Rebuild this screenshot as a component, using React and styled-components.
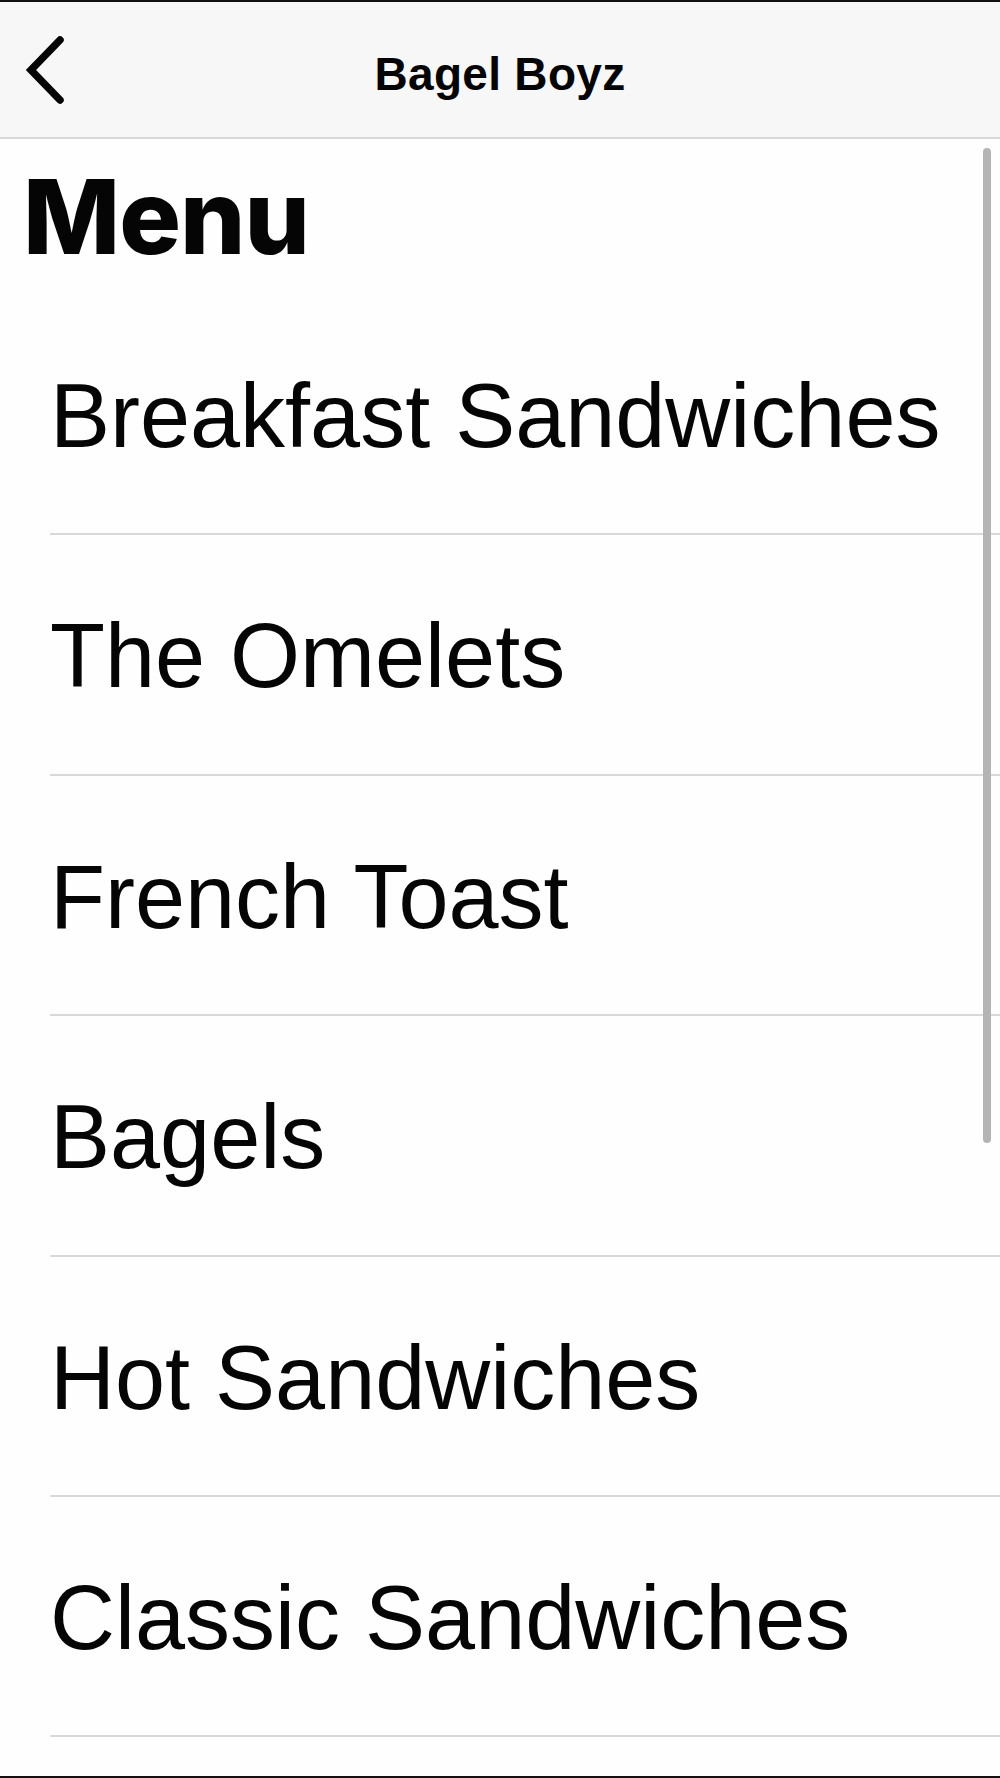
import React from "react";
import styled, { createGlobalStyle } from "styled-components";

const GlobalStyle = createGlobalStyle`
  html, body {
    margin: 0;
    padding: 0;
    background: #fefefe;
  }
  * {
    box-sizing: border-box;
  }
`;

const Screen = styled.div`
  position: relative;
  height: 1778px;
  overflow: hidden;
  background: #fefefe;
  border-top: 2px solid #111;
  border-bottom: 2px solid #111;
  font-family: "Liberation Sans", Arial, sans-serif;
  color: #050505;
`;

const NavBar = styled.header`
  display: grid;
  grid-template-columns: 1fr auto 1fr;
  align-items: center;
  height: 137px;
  background: #f7f7f8;
  border-bottom: 2px solid #d8d8d8;
`;

const BackButton = styled.button`
  justify-self: start;
  display: flex;
  align-items: center;
  padding: 0 0 0 22px;
  margin-top: 1px;
  border: none;
  background: none;
  cursor: pointer;
`;

const NavTitle = styled.h1`
  margin: 0;
  padding-top: 9px;
  font-size: 46px;
  line-height: 126px;
  font-weight: 700;
  letter-spacing: 0.3px;
`;

const Heading = styled.h2`
  margin: 0;
  padding-left: 23px;
  font-family: Inter, "Liberation Sans", sans-serif;
  font-size: 103px;
  line-height: 156px;
  font-weight: 800;
  letter-spacing: -1px;
`;

const List = styled.ul`
  list-style: none;
  margin: 0;
  padding: 0;
`;

const Row = styled.li`
  margin-left: 50px;
  padding-top: 4px;
  line-height: 234.4px;
  font-size: 90px;
  font-weight: 400;
  white-space: nowrap;
  border-bottom: 2px solid #d9d9d9;
`;

const ScrollThumb = styled.div`
  position: absolute;
  top: 146px;
  right: 9px;
  width: 8px;
  height: 995px;
  border-radius: 4px;
  background: #b4b4b4;
`;

const sections = [
  "Breakfast Sandwiches",
  "The Omelets",
  "French Toast",
  "Bagels",
  "Hot Sandwiches",
  "Classic Sandwiches",
];

function Chevron() {
  return (
    <svg width="46" height="72" viewBox="0 0 46 72" fill="none">
      <path
        d="M38 6 L9 36 L38 66"
        stroke="#050505"
        strokeWidth="7.5"
        strokeLinecap="round"
        strokeLinejoin="miter"
      />
    </svg>
  );
}

export default function App() {
  return (
    <>
      <GlobalStyle />
      <Screen>
        <NavBar>
          <BackButton aria-label="Back">
            <Chevron />
          </BackButton>
          <NavTitle>Bagel Boyz</NavTitle>
          <span />
        </NavBar>
        <Heading>Menu</Heading>
        <List>
          {sections.map((name) => (
            <Row key={name}>{name}</Row>
          ))}
        </List>
        <ScrollThumb />
      </Screen>
    </>
  );
}
